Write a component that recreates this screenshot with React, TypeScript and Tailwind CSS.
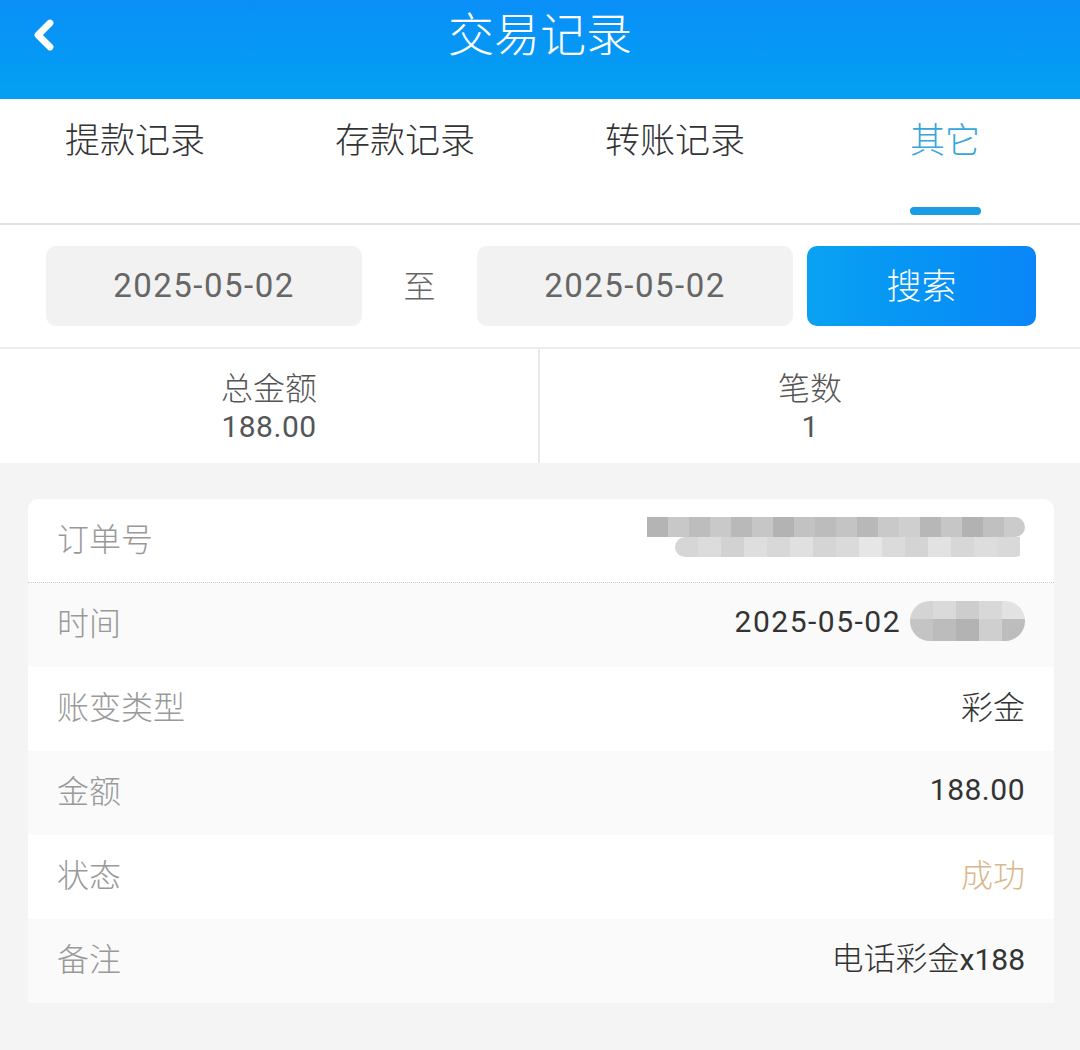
import { ChevronLeft } from 'lucide-react';

const cjk = "font-['Noto_Sans_CJK_SC',sans-serif] font-light";
const num = "font-['Roboto','Noto_Sans_CJK_SC',sans-serif] font-normal";

const tabs = ['提款记录', '存款记录', '转账记录', '其它'];

// mosaic blocks standing in for the blurred order number / time
const orderTop = [
  'bg-[#b4b4b4]', 'bg-[#c8c8c8]', 'bg-[#bdbdbd]', 'bg-[#c9c9c9]', 'bg-[#b9b9b9]', 'bg-[#c6c6c6]',
  'bg-[#b3b3b3]', 'bg-[#c2c2c2]', 'bg-[#bcbcbc]', 'bg-[#c4c4c4]', 'bg-[#b8b8b8]', 'bg-[#c9c9c9]',
  'bg-[#cfcfcf]', 'bg-[#b7b7b7]', 'bg-[#c6c6c6]', 'bg-[#b2b2b2]', 'bg-[#c0c0c0]', 'bg-[#cbcbcb]',
];
const orderBottom = [
  'bg-[#d6d6d6]', 'bg-[#dcdcdc]', 'bg-[#d2d2d2]', 'bg-[#dedede]', 'bg-[#d8d8d8]', 'bg-[#e0e0e0]',
  'bg-[#d5d5d5]', 'bg-[#dadada]', 'bg-[#e6e6e6]', 'bg-[#dbdbdb]', 'bg-[#d4d4d4]', 'bg-[#e2e2e2]',
  'bg-[#d7d7d7]', 'bg-[#dddddd]', 'bg-[#d9d9d9]',
];
const timeTop = ['bg-[#d4d4d4]', 'bg-[#dadada]', 'bg-[#cdcdcd]', 'bg-[#d8d8d8]', 'bg-[#e2e2e2]'];
const timeBottom = ['bg-[#c4c4c4]', 'bg-[#bcbcbc]', 'bg-[#b3b3b3]', 'bg-[#cfcfcf]', 'bg-[#bdbdbd]'];

function OrderBlur() {
  return (
    <div className="flex flex-col">
      <div className="flex h-5 overflow-hidden rounded-r-[10px]">
        {orderTop.map((c, i) => (
          <div key={i} className={`h-5 w-[21px] ${c}`} />
        ))}
      </div>
      <div className="ml-7 flex h-5 overflow-hidden rounded-b-[12px] rounded-l-[12px]">
        {orderBottom.map((c, i) => (
          <div key={i} className={`h-5 w-[23px] ${c}`} />
        ))}
      </div>
    </div>
  );
}

function TimeBlur() {
  return (
    <div className="flex flex-col overflow-hidden rounded-[20px]">
      <div className="flex h-[18px]">
        {timeTop.map((c, i) => (
          <div key={i} className={`h-[18px] w-[23px] ${c}`} />
        ))}
      </div>
      <div className="flex h-[22px]">
        {timeBottom.map((c, i) => (
          <div key={i} className={`h-[22px] w-[23px] ${c}`} />
        ))}
      </div>
    </div>
  );
}

function Row({
  label,
  children,
  shaded,
  dotted,
}: {
  label: string;
  children: React.ReactNode;
  shaded?: boolean;
  dotted?: boolean;
}) {
  return (
    <div
      className={`flex h-[84px] items-center justify-between pb-[8px] pl-[29px] pr-[29px] ${
        shaded ? 'bg-[#fafafa]' : 'bg-white'
      } ${dotted ? 'border-b border-dotted border-[#d0d0d0]' : ''}`}
    >
      <span className="text-[32px] text-[#999]">{label}</span>
      <div className="flex items-center">{children}</div>
    </div>
  );
}

export default function App() {
  return (
    <div className={`min-h-[1050px] w-[1080px] bg-[#f4f4f4] ${cjk}`}>
      {/* header */}
      <div className="relative h-[99px] bg-gradient-to-b from-[#0a8ff8] to-[#04a0f2]">
        <ChevronLeft className="absolute left-[20px] top-[11px] h-[48px] w-[48px] text-white" strokeWidth={3.4} />
        <div className="text-center text-[46px] leading-[62px] text-white">交易记录</div>
      </div>

      {/* tabs */}
      <div className="grid h-[126px] grid-cols-4 border-b-2 border-[#e2e2e2] bg-white">
        {tabs.map((t, i) => (
          <div key={t} className="flex flex-col items-center">
            <span
              className={`mt-[17px] text-[35px] leading-[44px] ${
                i === 3 ? 'text-[#36a6dc]' : 'text-[#333]'
              }`}
            >
              {t}
            </span>
            {i === 3 && <div className="mt-[47px] h-[8px] w-[71px] rounded-full bg-[#1a9ce4]" />}
          </div>
        ))}
      </div>

      {/* search */}
      <div className="flex h-[124px] items-center border-b-2 border-[#ececec] bg-white pl-[46px] pr-[44px]">
        <div className={`flex h-[80px] w-[316px] items-center justify-center rounded-[10px] bg-[#f2f2f2] ${num} text-[33px] tracking-[1.5px] text-[#666]`}>
          2025-05-02
        </div>
        <div className="flex w-[115px] justify-center pb-[4px] text-[32px] text-[#666]">至</div>
        <div className={`flex h-[80px] w-[316px] items-center justify-center rounded-[10px] bg-[#f2f2f2] ${num} text-[33px] tracking-[1.5px] text-[#666]`}>
          2025-05-02
        </div>
        <div className="ml-[14px] flex h-[80px] flex-1 items-center justify-center rounded-[10px] bg-gradient-to-r from-[#0aa2f2] to-[#0a85f8] pb-[4px] text-[35px] text-white">
          搜索
        </div>
      </div>

      {/* summary */}
      <div className="grid h-[114px] grid-cols-2 bg-white">
        <div className="flex flex-col items-center justify-center border-r-2 border-[#e8e8e8]">
          <span className="text-[32px] leading-[42px] text-[#555]">总金额</span>
          <span className={`${num} text-[30px] leading-[40px] tracking-[0.5px] text-[#555]`}>188.00</span>
        </div>
        <div className="flex flex-col items-center justify-center">
          <span className="text-[32px] leading-[42px] text-[#555]">笔数</span>
          <span className={`${num} text-[30px] leading-[40px] text-[#555]`}>1</span>
        </div>
      </div>

      {/* record card */}
      <div className="pl-[28px] pr-[26px] pt-[36px]">
        <div className="overflow-hidden rounded-t-[10px]">
          <Row label="订单号" dotted>
            <OrderBlur />
          </Row>
          <Row label="时间" shaded>
            <span className={`${num} text-[30px] tracking-[1.5px] text-[#333]`}>2025-05-02&nbsp;</span>
            <TimeBlur />
          </Row>
          <Row label="账变类型">
            <span className="text-[32px] text-[#333]">彩金</span>
          </Row>
          <Row label="金额" shaded>
            <span className={`${num} text-[30px] tracking-[0.5px] text-[#333]`}>188.00</span>
          </Row>
          <Row label="状态">
            <span className="text-[32px] text-[#d8b88c]">成功</span>
          </Row>
          <Row label="备注" shaded>
            <span className="text-[32px] text-[#333]">
              电话彩金<span className={`${num} text-[30px]`}>x188</span>
            </span>
          </Row>
        </div>
      </div>
    </div>
  );
}
